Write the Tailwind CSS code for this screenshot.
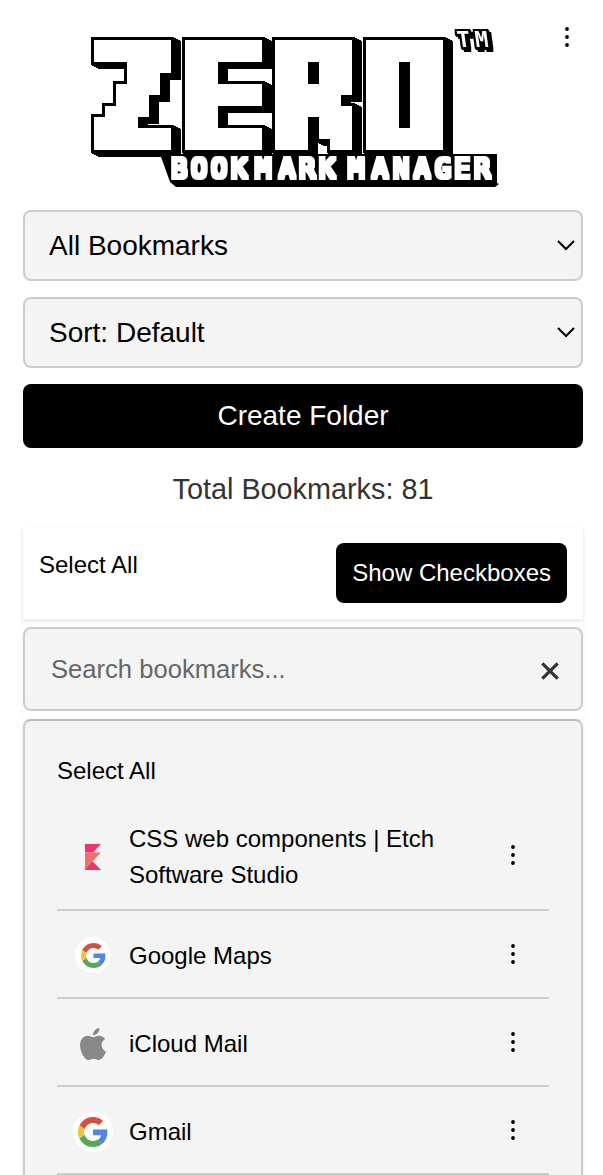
<!DOCTYPE html>
<html lang="en">
<head>
<meta charset="utf-8">
<title>Zero Bookmark Manager</title>
<script src="https://cdn.jsdelivr.net/npm/@tailwindcss/browser@4"></script>
</head>
<body class="h-[1175px] overflow-hidden bg-white font-['Liberation_Sans',Arial,sans-serif] text-2xl text-black">
<svg class="hidden">
  <symbol id="dots" viewBox="0 0 4 20"><circle cx="2" cy="2" r="1.9"/><circle cx="2" cy="10" r="1.9"/><circle cx="2" cy="18" r="1.9"/></symbol>
  <symbol id="g" viewBox="0 0 48 48">
    <path fill="#d94f3d" d="M24 9.5c3.54 0 6.71 1.22 9.21 3.6l6.85-6.85C35.9 2.38 30.47 0 24 0 14.62 0 6.51 5.38 2.56 13.22l7.98 6.19C12.43 13.72 17.74 9.5 24 9.5z"/>
    <path fill="#5383ec" d="M46.98 24.55c0-1.57-.15-3.09-.38-4.55H24v9.02h12.94c-.58 2.96-2.26 5.48-4.78 7.18l7.73 6c4.51-4.18 7.09-10.36 7.09-17.65z"/>
    <path fill="#f2c042" d="M10.53 28.59c-.48-1.45-.76-2.99-.76-4.59s.27-3.14.76-4.59l-7.98-6.19C.92 16.46 0 20.12 0 24c0 3.88.92 7.54 2.56 10.78l7.97-6.19z"/>
    <path fill="#58a55c" d="M24 48c6.48 0 11.93-2.13 15.89-5.81l-7.73-6c-2.15 1.45-4.92 2.3-8.16 2.3-6.26 0-11.57-4.22-13.47-9.91l-7.98 6.19C6.51 42.62 14.62 48 24 48z"/>
  </symbol>
</svg>
<div class="flex flex-col pl-[23px] pr-5">
  <header class="relative flex h-[210px] justify-center">
    <svg class="-ml-[23px] mr-auto h-[200px] w-[520px] shrink-0" viewBox="0 0 520 200" fill="#fff" font-family="'DejaVu Sans Mono',monospace">
      <defs>
        <!-- Thickens a letter, samples it on an 11px grid, then adds the outline and extrusion -->
        <filter id="block" filterUnits="userSpaceOnUse" x="-11" y="-11" width="110" height="143" color-interpolation-filters="sRGB">
          <feMorphology in="SourceGraphic" operator="dilate" radius="10 6" result="soft"/>
          <feColorMatrix in="soft" values="0 0 0 0 1  0 0 0 0 1  0 0 0 0 1  0 0 0 50 -10" result="fat"/>
          <feFlood x="5" y="5" width="1" height="1" flood-color="#fff" result="dot"/>
          <feComposite in="dot" in2="dot" operator="over" x="0" y="0" width="11" height="11" result="cell"/>
          <feTile in="cell" result="grid"/>
          <feComposite in="grid" in2="fat" operator="in" x="0" y="0" width="77" height="110" result="pts"/>
          <feMorphology in="pts" operator="dilate" radius="5" x="-11" y="-11" width="110" height="143" result="face"/>
          <feColorMatrix in="face" values="0 0 0 0 0  0 0 0 0 0  0 0 0 0 0  0 0 0 1 0" result="dark"/>
          <feMorphology in="dark" operator="dilate" radius="3" result="e0"/>
          <feOffset in="e0" dx="1" dy="1" result="a"/><feMerge result="e1"><feMergeNode in="e0"/><feMergeNode in="a"/></feMerge>
          <feOffset in="e1" dx="2" dy="1" result="b"/><feMerge result="e2"><feMergeNode in="e1"/><feMergeNode in="b"/></feMerge>
          <feOffset in="e2" dx="4" dy="2" result="c"/><feMerge><feMergeNode in="e2"/><feMergeNode in="c"/><feMergeNode in="face"/></feMerge>
        </filter>
        <filter id="small" filterUnits="userSpaceOnUse" x="150" y="150" width="350" height="40" color-interpolation-filters="sRGB">
          <feMorphology operator="dilate" radius="2"/>
        </filter>
        <filter id="mark" filterUnits="userSpaceOnUse" x="445" y="20" width="60" height="40" color-interpolation-filters="sRGB">
          <feMorphology in="SourceAlpha" operator="dilate" radius="2" result="e0"/>
          <feOffset in="e0" dx="1" dy="1" result="a"/><feOffset in="e0" dx="3" dy="3" result="b"/>
          <feMerge><feMergeNode in="e0"/><feMergeNode in="a"/><feMergeNode in="b"/><feMergeNode in="SourceGraphic"/></feMerge>
        </filter>
      </defs>
      <g font-size="134">
        <g transform="translate(94 40)"><g filter="url(#block)"><text transform="translate(3 104) scale(.87 1)">Z</text></g></g>
        <g transform="translate(185 40)"><g filter="url(#block)"><text transform="translate(-3 104) scale(.97 1)">E</text></g></g>
        <g transform="translate(275 40)"><g filter="url(#block)"><text transform="translate(-5 109) scale(1.07 1.1)">R</text></g></g>
        <g transform="translate(366 40)"><g filter="url(#block)"><text transform="translate(-1 110) scale(.98 1.12)">O</text></g></g>
      </g>
      <path fill="#000" d="M160 154H497V183L499 184L495 187H176L170 182Z"/>
      <g filter="url(#small)">
        <text font-size="27" x="171 191 211 231 255 279 299 319" y="178">BOOKMARK</text>
        <text font-size="27" x="348 372 393 414 435 454 474" y="178">MANAGER</text>
      </g>
      <g filter="url(#mark)" font-weight="700"><text font-size="22" transform="translate(459 47) skewX(8)" x="-1 17" y="0">TM</text></g>
    </svg>
    <button aria-label="Menu" class="absolute right-[14.5px] top-[27px] flex"><svg class="h-5 w-1"><use href="#dots"/></svg></button>
  </header>

  <div class="flex flex-col gap-4 text-[28px]">
    <div class="flex h-[71px] items-center justify-between rounded-lg border-2 border-[#ccc] bg-[#f4f4f4] pl-6 pr-1.5">
      <span>All Bookmarks</span>
      <svg class="mb-0.5 h-3 w-[18px]" viewBox="0 0 18 12" fill="none" stroke="#000" stroke-width="2"><path d="M1 2L9 10L17 2"/></svg>
    </div>
    <div class="flex h-[71px] items-center justify-between rounded-lg border-2 border-[#ccc] bg-[#f4f4f4] pl-6 pr-1.5">
      <span>Sort: Default</span>
      <svg class="mb-0.5 h-3 w-[18px]" viewBox="0 0 18 12" fill="none" stroke="#000" stroke-width="2"><path d="M1 2L9 10L17 2"/></svg>
    </div>
    <button class="h-16 rounded-lg bg-black text-white">Create Folder</button>
  </div>

  <p class="mt-5 text-center text-[28.8px] leading-[43px] text-[#333]">Total Bookmarks: 81</p>

  <div class="mt-4 flex flex-col gap-2 shadow-[0_2px_4px_rgba(0,0,0,0.06)]">
    <div class="flex h-[92px] items-start justify-between px-4 pt-4 shadow-[0_2px_4px_rgba(0,0,0,0.1)]">
      <span class="pt-1 leading-9">Select All</span>
      <button class="h-[60px] rounded-lg bg-black px-4 text-white">Show Checkboxes</button>
    </div>
    <div class="mb-2 flex h-[84px] items-center justify-between rounded-lg border-2 border-[#ccc] bg-[#f4f4f4] pl-[26px] pr-[22px] text-[25.6px] text-[#666]">
      <span>Search bookmarks...</span>
      <svg class="mt-1 h-[18px] w-[18px]" viewBox="0 0 18 18" stroke="#333" stroke-width="3.2"><path d="M1.3 1.3L16.7 16.7M16.7 1.3L1.3 16.7"/></svg>
    </div>
  </div>

  <main class="h-[500px] rounded-t-lg border-2 border-[#ccc] border-t-[#bbb] bg-[#f4f4f4] px-8 pt-8 shadow-[0_2px_4px_rgba(0,0,0,0.1)]">
    <div class="leading-9">Select All</div>
    <ul class="mt-[14px] leading-9">
      <li class="flex h-[108px] items-center border-b-2 border-[#ccc]">
        <span class="flex w-[72px] justify-center pt-0.5"><svg class="h-[26px] w-4" viewBox="0 0 16 26"><path fill="#f0356b" d="M0 0H16L8 8.5H0ZM0 26H16L7 17Z"/><path fill="#f0706c" d="M0 8.5H16L8 17L0 26Z"/><path fill="#f0356b" d="M0 26L7.5 17.5L16 26Z"/></svg></span>
        <span class="w-[340px] pt-0.5">CSS web components | Etch Software Studio</span>
        <svg class="mb-0.5 ml-[42px] h-5 w-1"><use href="#dots"/></svg>
      </li>
      <li class="flex h-[88px] items-center border-b-2 border-[#ccc]">
        <span class="flex w-[72px] justify-center pt-0.5"><span class="flex size-9 items-center justify-center rounded-full bg-white"><svg class="size-[25px]"><use href="#g"/></svg></span></span>
        <span class="w-[340px] pt-1">Google Maps</span>
        <svg class="ml-[42px] h-5 w-1"><use href="#dots"/></svg>
      </li>
      <li class="flex h-[88px] items-center border-b-2 border-[#ccc]">
        <span class="flex w-[72px] justify-center"><svg class="mt-1 h-8 w-[26px]" viewBox="2.2 0 19.6 24" preserveAspectRatio="none" fill="#888"><path d="M12.152 6.896c-.948 0-2.415-1.078-3.96-1.04-2.04.027-3.91 1.183-4.961 3.014-2.117 3.675-.546 9.103 1.519 12.09 1.013 1.454 2.208 3.09 3.792 3.039 1.52-.065 2.09-.987 3.935-.987 1.831 0 2.35.987 3.96.948 1.637-.026 2.676-1.48 3.676-2.948 1.156-1.688 1.636-3.325 1.662-3.415-.039-.013-3.182-1.221-3.22-4.857-.026-3.04 2.48-4.494 2.597-4.559-1.429-2.09-3.623-2.324-4.39-2.376-2-.156-3.675 1.09-4.61 1.09zM15.53 3.83c.843-1.012 1.4-2.427 1.245-3.83-1.207.052-2.662.805-3.532 1.818-.78.896-1.454 2.338-1.273 3.714 1.338.104 2.715-.688 3.559-1.701"/></svg></span>
        <span class="w-[340px] pt-1">iCloud Mail</span>
        <svg class="ml-[42px] h-5 w-1"><use href="#dots"/></svg>
      </li>
      <li class="flex h-[88px] items-center border-b-2 border-[#ccc]">
        <span class="flex w-[72px] justify-center"><span class="mt-1 flex size-10 items-center justify-center rounded-full bg-white"><svg class="size-[30px]"><use href="#g"/></svg></span></span>
        <span class="w-[340px] pt-1">Gmail</span>
        <svg class="ml-[42px] h-5 w-1"><use href="#dots"/></svg>
      </li>
    </ul>
  </main>
</div>
</body>
</html>
